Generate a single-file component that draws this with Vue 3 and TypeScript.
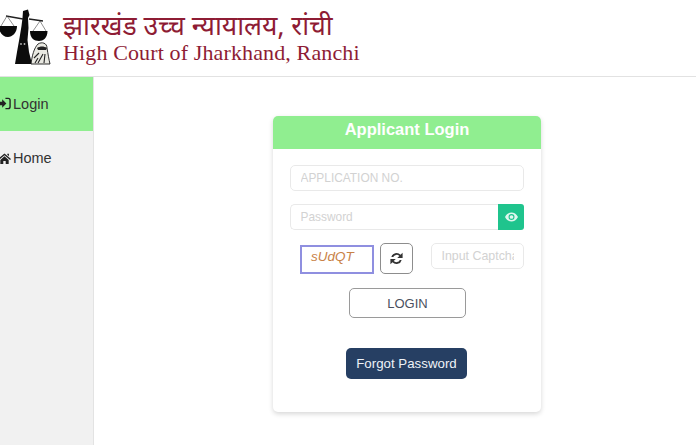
<script setup lang="ts">
const menu = [
  { label: 'Login', icon: 'login', active: true },
  { label: 'Home', icon: 'home', active: false },
]
</script>

<template>
  <div class="page">
    <header class="top">
      <svg class="emblem" viewBox="0 9 52 56" aria-hidden="true">
        <path d="M23 11 L28 9.500 L29.500 15 L28 18 L28.500 28 L27.500 40 L29 52 L32 64 L15 64 L17 52 L19.500 38 L21.500 26 L22.500 18 Z" fill="#0c0c0c" />
        <path d="M6 16 L23 19 M29 19 L43 21" stroke="#222" stroke-width="1.300" fill="none" />
        <path d="M7 16 L1 26 M7 16 L14 26 M40 21 L33 31 M40 21 L46 31" stroke="#444" stroke-width=".6" fill="none" />
        <path d="M-1 26 H17 C17 33 12 37 8 37 C3 37 -1 33 -1 26 Z" fill="#0a0a0a" />
        <path d="M30 31 H47.500 C47.500 38 43 41 39 41 C34 41 30 38 30 31 Z" fill="#0a0a0a" />
        <path d="M31 64 C32 56 34 48 38 44 C42 41.500 47 43 47 48 C48 54 49 60 50 64 Z" fill="#e9e9e2" stroke="#1a1a1a" stroke-width=".9" />
        <path d="M37 48 C40 46 44 46 47 48 L46 50 H38 Z" fill="#222" />
        <path d="M34 58 L39 53 M38 63 L43 54 M44 63 L45 54 M35 63 L38 58" stroke="#222" stroke-width="1.100" fill="none" />
        <circle cx="21" cy="44" r=".9" fill="#bbb" />
        <circle cx="24.500" cy="44" r=".9" fill="#bbb" />
      </svg>
      <div class="titles">
        <div class="hindi">झारखंड उच्च न्यायालय, रांची</div>
        <div class="english">High Court of Jharkhand, Ranchi</div>
      </div>
    </header>

    <div class="body">
      <nav class="side">
        <a v-for="m in menu" :key="m.label" class="item" :class="{ active: m.active }">
          <svg v-if="m.icon === 'login'" class="micon" viewBox="0 0 14 14" aria-hidden="true">
            <path d="M0 5 H4.500 V2.500 L9 7 L4.500 11.500 V9 H0 Z" fill="#222" />
            <path d="M8 1.500 H11 C12.200 1.500 13 2.300 13 3.500 V10.500 C13 11.700 12.200 12.500 11 12.500 H8" fill="none" stroke="#222" stroke-width="1.500" />
          </svg>
          <svg v-else class="micon" viewBox="0 0 14 14" aria-hidden="true">
            <path d="M0 7.500 L7 1.500 L14 7.500 L13 8.500 L7 3.400 L1 8.500 Z" fill="#222" />
            <path d="M2.500 8.500 L7 4.700 L11.500 8.500 V13 H8.300 V9.800 H5.700 V13 H2.500 Z" fill="#222" />
            <path d="M10 2 H11.800 V4.500 L10 3 Z" fill="#222" />
          </svg>
          <span>{{ m.label }}</span>
        </a>
      </nav>

      <main class="content">
        <section class="card">
          <h2 class="card-title">Applicant Login</h2>
          <div class="form">
            <input class="field" placeholder="APPLICATION NO." />
            <div class="pass-row">
              <input class="field pass" placeholder="Password" />
              <button class="eye" aria-label="Show password">
                <svg viewBox="0 0 16 12" width="13" height="10" aria-hidden="true">
                  <path fill-rule="evenodd" d="M0 6 C2 2 5 .5 8 .5 C11 .5 14 2 16 6 C14 10 11 11.500 8 11.500 C5 11.500 2 10 0 6 Z M8 2.300 A3.700 3.700 0 1 0 8 9.700 A3.700 3.700 0 1 0 8 2.300 Z" fill="#dff7ee" />
                  <circle cx="8" cy="6" r="2.300" fill="#dff7ee" />
                </svg>
              </button>
            </div>
            <div class="captcha-row">
              <div class="captcha">sUdQT</div>
              <button class="refresh" aria-label="Refresh captcha">
                <svg viewBox="0 0 16 16" width="15" height="15" aria-hidden="true">
                  <path d="M2.500 6.500 A5.700 5.700 0 0 1 12.300 4 L14.500 1.800 V7.500 H8.800 L11 5.300 A4 4 0 0 0 4.500 6.500 Z" fill="#333" />
                  <path d="M13.500 9.500 A5.700 5.700 0 0 1 3.700 12 L1.500 14.200 V8.500 H7.200 L5 10.700 A4 4 0 0 0 11.500 9.500 Z" fill="#333" />
                </svg>
              </button>
              <input class="field cap-input" placeholder="Input Captcha" />
            </div>
            <button class="login">LOGIN</button>
            <button class="forgot">Forgot Password</button>
          </div>
        </section>
      </main>
    </div>
  </div>
</template>

<style>
html, body { margin: 0; background: #fff; }
</style>

<style scoped>
.page {
  width: 696px;
  height: 445px;
  overflow: hidden;
  display: flex;
  flex-direction: column;
  font-family: "Liberation Sans", Arial, sans-serif;
  color: #333;
}
.top {
  height: 77px;
  flex: none;
  box-sizing: border-box;
  border-bottom: 1px solid #e2e2e2;
  display: flex;
  align-items: flex-start;
  padding-top: 9px;
}
.emblem { width: 52px; height: 56px; flex: none; overflow: visible; }
.titles { margin-left: 11px; margin-top: 7px; color: #8e1c34; }
.hindi {
  font-family: "Noto Sans Devanagari", "Lohit Devanagari", "Liberation Serif", serif;
  font-size: 26.500px;
  line-height: 25px;
  white-space: nowrap;
}
.english {
  font-family: "Liberation Serif", serif;
  font-size: 22px;
  line-height: 24px;
  letter-spacing: .13px;
  white-space: nowrap;
}
.body { flex: 1; display: flex; min-height: 0; }
.side {
  width: 94px;
  flex: none;
  box-sizing: border-box;
  background: #f1f1f1;
  border-right: 1px solid #e3e3e3;
}
.item {
  height: 54px;
  display: flex;
  align-items: center;
  gap: 2px;
  margin-left: -2px;
  font-size: 14.500px;
  color: #333;
}
.active { background: #90ee90; box-sizing: border-box; padding-bottom: 1px; }
.micon { width: 13px; height: 13px; flex: none; }
.content { flex: 1; padding: 39px 0 0 179px; }
.card {
  width: 268px;
  height: 296px;
  box-sizing: border-box;
  border-radius: 5px;
  background: #fff;
  box-shadow: 0 2px 5px rgba(0, 0, 0, .16);
  overflow: hidden;
}
.card-title {
  margin: 0;
  height: 33px;
  background: #90ee90;
  color: #fff;
  font-size: 16.500px;
  font-weight: 700;
  line-height: 26px;
  text-align: center;
}
.form {
  display: flex;
  flex-direction: column;
  padding: 16px 17px 0;
}
.field {
  box-sizing: border-box;
  border: 1px solid #e9e9e9;
  border-radius: 5px;
  background: #fff;
  padding: 0 9.500px;
  height: 26px;
  width: 100%;
  font-family: inherit;
  font-size: 11.900px;
  outline: none;
}
.field::placeholder { color: #d2d2d2; opacity: 1; }
.pass-row { display: flex; margin-top: 13px; }
.pass { flex: 1; min-width: 0; border-radius: 5px 0 0 5px; border-right: 0; }
.eye {
  width: 26px;
  height: 26px;
  padding: 0;
  border: 0;
  border-radius: 0 3px 3px 0;
  background: #1fc48d;
  display: flex;
  align-items: center;
  justify-content: center;
}
.captcha-row { display: flex; align-items: flex-start; margin-top: 13px; }
.captcha {
  box-sizing: border-box;
  width: 74px;
  height: 29px;
  margin: 2px 0 0 10px;
  border: 2px solid #8f8fe0;
  font-style: italic;
  font-size: 13.500px;
  line-height: 19px;
  padding-left: 9px;
  color: #c98247;
}
.refresh {
  box-sizing: border-box;
  width: 33px;
  height: 31px;
  margin-left: 6px;
  padding: 0;
  border: 1px solid #8d8d8d;
  border-radius: 5px;
  background: #fff;
  display: flex;
  align-items: center;
  justify-content: center;
}
.cap-input { width: 93px; margin-left: 18px; flex: none; font-size: 12.400px; }
.login {
  box-sizing: border-box;
  align-self: center;
  width: 117px;
  height: 30px;
  margin: 14px 0 0 1px;
  padding: 0;
  background: #fff;
  border: 1px solid #9a9a9a;
  border-radius: 5px;
  font-family: inherit;
  font-size: 13px;
  color: #4a5160;
}
.forgot {
  box-sizing: border-box;
  align-self: center;
  width: 121px;
  height: 31px;
  margin: 30px 1px 0 0;
  padding: 0;
  background: #263f63;
  border: 0;
  border-radius: 5px;
  font-family: inherit;
  font-size: 13.300px;
  color: #eef2f7;
}
</style>
